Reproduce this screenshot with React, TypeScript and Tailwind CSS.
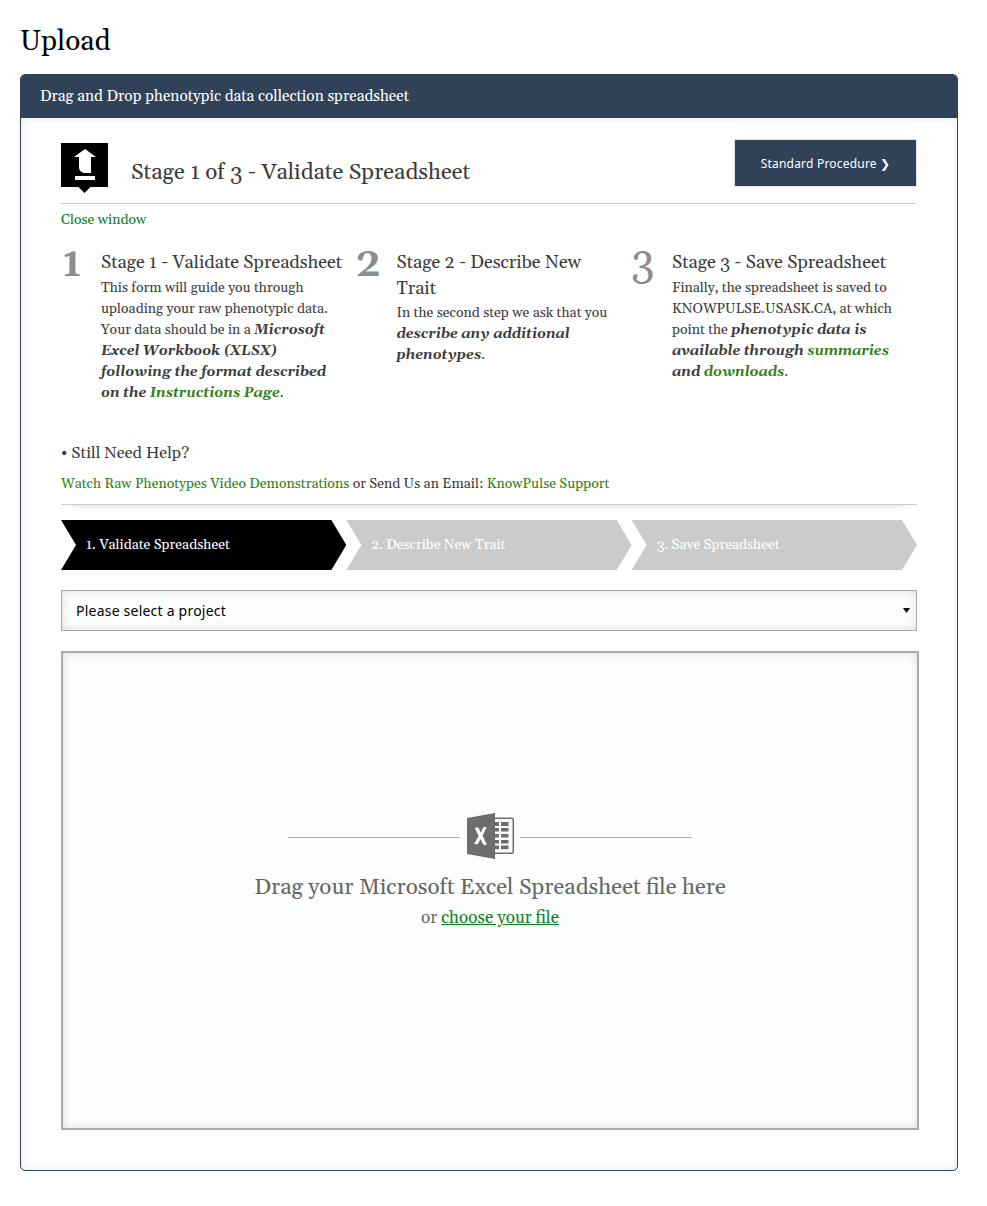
import type { ReactNode } from "react";

function UploadIcon() {
  return (
    <svg width="47" height="50" viewBox="0 0 47 50" className="block shrink-0">
      <path d="M0 0H47V44H29.5L23.5 50L17.5 44H0Z" fill="#000" />
      <path d="M24 6L35 14H30V30H24C20.5 30 18 27.5 18 24V14H13Z" fill="#fff" />
      <rect x="14" y="33" width="20" height="4" fill="#fff" />
    </svg>
  );
}

function ExcelIcon() {
  return (
    <svg width="48" height="46" viewBox="0 0 48 46" className="block shrink-0">
      <rect x="26" y="5.2" width="20.3" height="35" rx="1.5" fill="#fcfefd" stroke="#6d6d6d" strokeWidth="1.5" />
      <g fill="#6d6d6d">
        <path d="M0 5L28 0V46L0 41Z" />
        <path d="M28 9h4v4h-4zM34 9h7.5v4H34zM28 15h4v3.6h-4zM34 15h7.5v3.6H34zM28 21h4v3.6h-4zM34 21h7.5v3.6H34zM28 27h4v3.6h-4zM34 27h7.5v3.6H34zM28 32.6h4v3.6h-4zM34 32.6h7.5v3.6H34z" />
      </g>
      <path d="M7.6 14.8L11.4 14.5L13.8 19.7L16.2 14.2L19.600 14L15.6 22.800L20 32L16.200 31.700L13.600 26L10.800 31.300L7 31L11.700 22.900Z" fill="#fff" />
    </svg>
  );
}

function Stage({ n, title, className, numberClass, children }: { n: string; title: ReactNode; className: string; numberClass: string; children: ReactNode }) {
  return (
    <div className={`flex ${className}`}>
      <div className={`w-10 shrink-0 text-[42px] leading-[27px] text-[#8c8c8c] ${numberClass}`}>{n}</div>
      <div className="whitespace-nowrap">
        <h3 className="text-[18.2px] leading-[25.5px]">{title}</h3>
        <p className="mt-0.5 text-sm leading-[21px]">{children}</p>
      </div>
    </div>
  );
}

function Step({ label, active }: { label: string; active?: boolean }) {
  return (
    <li
      className={`flex h-[50px] flex-1 items-center pl-[25px] text-sm leading-5 text-white [clip-path:polygon(0_0,calc(100%-15px)_0,100%_50%,calc(100%-15px)_100%,0_100%,15px_50%)] ${active ? "bg-black" : "bg-[#cbcbcb]"}`}
    >
      {label}
    </li>
  );
}

const Link = ({ children }: { children: ReactNode }) => (
  <a href="#" className="text-[#317f18]">{children}</a>
);

export default function App() {
  return (
    <main className="h-[1206px] bg-white pt-5 pl-5 font-[Gelasio,Georgia,'Liberation_Serif',serif] text-[#3b3b3b]">
      <h1 className="h-[42px] text-[28px] leading-[45px] text-black">Upload</h1>
      <section className="mt-3 h-[1097px] w-[938px] overflow-hidden rounded-[5px] border border-[#304257]">
        <header className="flex h-[43px] items-center bg-[#304257] pl-[19px] text-[15.4px] text-white">
          Drag and Drop phenotypic data collection spreadsheet
        </header>
        <div className="h-[1052px] px-10 pt-[21px] shadow-[inset_0_0_10px_rgba(0,0,0,0.09)]">
          <div className="flex h-[65px] border-b border-[#cbcbcb]">
            <div className="pt-1"><UploadIcon /></div>
            <h2 className="ml-[23px] pt-[17px] text-[22.4px] leading-[34px]">Stage 1 of 3 - Validate Spreadsheet</h2>
            <button className="ml-auto flex h-12 w-[183px] items-center justify-center border border-[#e6e6e6] bg-[#304257] pt-0.5 font-['Noto_Sans',sans-serif] text-[12px] tracking-[0.2px] text-white">
              Standard Procedure ❯
            </button>
          </div>
          <a href="#" className="mt-1.5 block text-sm leading-[21px] text-[#0b8321]">Close window</a>

          <div className="mt-[19px] flex h-[190px]">
            <Stage n="1" title="Stage 1 - Validate Spreadsheet" className="w-[295.5px]" numberClass="pl-px font-semibold">
              This form will guide you through<br />
              uploading your raw phenotypic data.<br />
              Your data should be in a <b><i>Microsoft<br />
              Excel Workbook (XLSX)<br />
              following the format described<br />
              on the <Link>Instructions Page</Link></i></b>.
            </Stage>
            <Stage n="2" title={<>Stage 2 - Describe New<br />Trait</>} className="w-[275.5px]" numberClass="-ml-px mr-px font-semibold">
              In the second step we ask that you<br />
              <b><i>describe any additional<br />
              phenotypes</i></b>.
            </Stage>
            <Stage n="3" title="Stage 3 - Save Spreadsheet" className="w-[285px]" numberClass="-ml-px mr-px">
              Finally, the spreadsheet is saved to<br />
              KNOWPULSE.USASK.CA, at which<br />
              point the <b><i>phenotypic data is<br />
              available through <Link>summaries</Link><br />
              and <Link>downloads</Link></i></b>.
            </Stage>
          </div>

          <h4 className="pt-0.5 text-[16.35px] leading-6">• Still Need Help?</h4>
          <p className="mt-[7.5px] text-sm leading-[21px]">
            <Link>Watch Raw Phenotypes Video Demonstrations</Link> or Send Us an Email: <Link>KnowPulse Support</Link>
          </p>
          <div className="mt-[9.5px] h-4 border-t border-[#cbcbcb]">
            <div className="h-[5px] bg-linear-to-b from-black/10 to-transparent [mask-image:linear-gradient(to_right,transparent_4px,black_24px,black_calc(100%-24px),transparent_calc(100%-4px))]" />
          </div>

          <ol className="flex">
            <Step label="1. Validate Spreadsheet" active />
            <Step label="2. Describe New Trait" />
            <Step label="3. Save Spreadsheet" />
          </ol>

          <div className="mt-5 flex h-[41px] items-center justify-between border border-[#aaa] bg-[#fcfefd] pr-1.5 pl-3.5 font-['Noto_Sans',sans-serif] text-sm tracking-[0.22px] text-black shadow-[inset_0_0_10px_rgba(0,0,0,0.13)]">
            Please select a project
            <svg width="7" height="5" viewBox="0 0 7 5" className="block"><path d="M0 0H7L3.5 5Z" /></svg>
          </div>

          <div className="mt-5 flex h-[479px] w-[858px] flex-col items-center border-2 border-[#aaa] bg-[#fcfefd] pt-40 text-[#666] shadow-[inset_0_0_10px_rgba(0,0,0,0.13)]">
            <div className="flex h-[46px] items-center justify-center">
              <div className="mt-[3px] h-px w-[172px] bg-[#aaa]" />
              <div className="flex w-[60px] justify-center pl-0.5"><ExcelIcon /></div>
              <div className="mt-[3px] h-px w-[172px] bg-[#aaa]" />
            </div>
            <p className="mt-3 text-[22.45px] leading-[34px]">Drag your Microsoft Excel Spreadsheet file here</p>
            <p className="text-[17.1px] leading-[26px]">
              or <a href="#" className="text-[#0b8321] underline">choose your file</a>
            </p>
          </div>
        </div>
      </section>
    </main>
  );
}
